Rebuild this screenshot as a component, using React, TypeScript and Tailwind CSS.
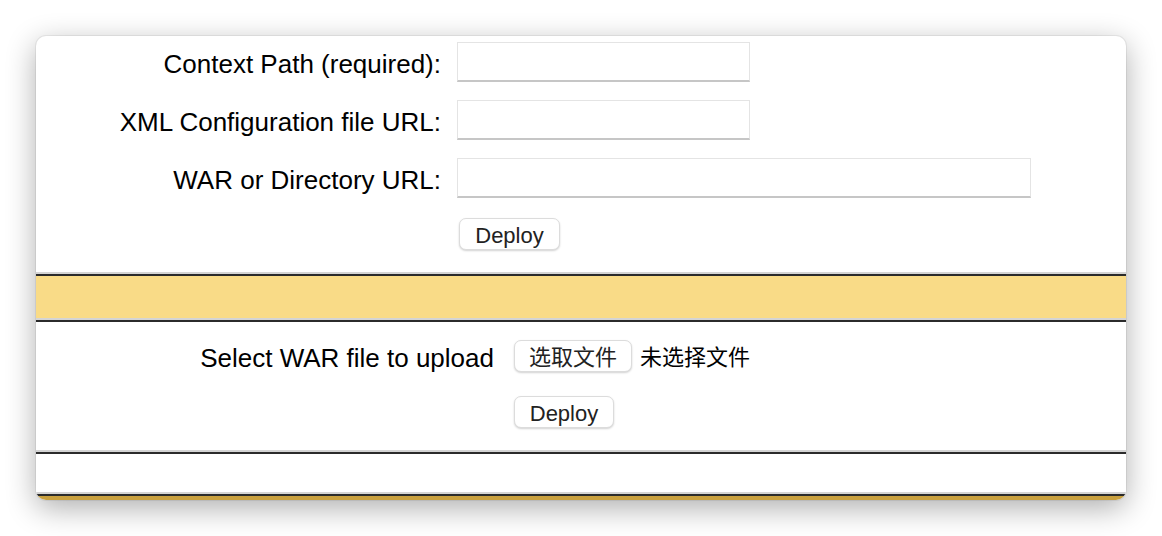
import React from 'react';

const FONT = '"Liberation Sans", Arial, "Noto Sans CJK SC", sans-serif';

// two-tone divider like the old table borders
const Rule = () => (
  <div>
    <div className="h-[2px] bg-[#d4d4d4]" />
    <div className="h-[2px] bg-[#2b2b2b]" />
  </div>
);

const Field: React.FC<{ label: string; width: string }> = ({ label, width }) => (
  <>
    <label className="pt-[4px] text-right text-[26px] leading-none text-black">{label}</label>
    <input
      type="text"
      className={`${width} h-[40px] bg-white border border-[#e4e4e4] border-b-2 border-b-[#c6c6c6] outline-none`}
    />
  </>
);

const MacButton: React.FC<{ children: React.ReactNode; className?: string }> = ({ children, className = '' }) => (
  <button
    className={`h-[32px] pt-[4px] rounded-[7px] bg-white border border-[#dcdcdc] shadow-[0_1px_2px_rgba(0,0,0,0.18)] text-[22px] leading-none text-[#222] ${className}`}
  >
    {children}
  </button>
);

export default function App() {
  return (
    <div className="min-h-screen bg-white pt-[36px] px-[36px]" style={{ fontFamily: FONT }}>
      <div className="w-[1090px] rounded-[10px] overflow-hidden bg-white shadow-[0_8px_30px_rgba(0,0,0,0.32),0_0_0_1px_rgba(0,0,0,0.06)]">
        {/* Deploy directory or WAR file located on server */}
        <div className="pt-[6px] pb-[22px]">
          <div className="grid grid-cols-[405px_1fr] gap-x-4 gap-y-[18px] items-center">
            <Field label="Context Path (required):" width="w-[293px]" />
            <Field label="XML Configuration file URL:" width="w-[293px]" />
            <Field label="WAR or Directory URL:" width="w-[574px]" />
            <div />
            <div className="pt-[2px]">
              <MacButton className="ml-[2px] w-[101px]">Deploy</MacButton>
            </div>
          </div>
        </div>

        <Rule />
        <div className="h-[42px] bg-[#f9db87]" />
        <Rule />

        {/* WAR file to deploy */}
        <div className="pt-[18px] pb-[22px]">
          <div className="grid grid-cols-[458px_1fr] gap-x-5 gap-y-[24px] items-center">
            <span className="pt-[4px] text-right text-[26px] leading-none text-black">Select WAR file to upload</span>
            <div className="flex items-center gap-2">
              <MacButton className="w-[118px]">选取文件</MacButton>
              <span className="pt-[3px] text-[22px] leading-none text-black">未选择文件</span>
            </div>
            <div />
            <div>
              <MacButton className="w-[100px]">Deploy</MacButton>
            </div>
          </div>
        </div>

        <Rule />
        <div className="h-[38px] bg-white" />
        <Rule />
        <div className="h-[4px] bg-[#c9a03e]" />
      </div>
    </div>
  );
}
